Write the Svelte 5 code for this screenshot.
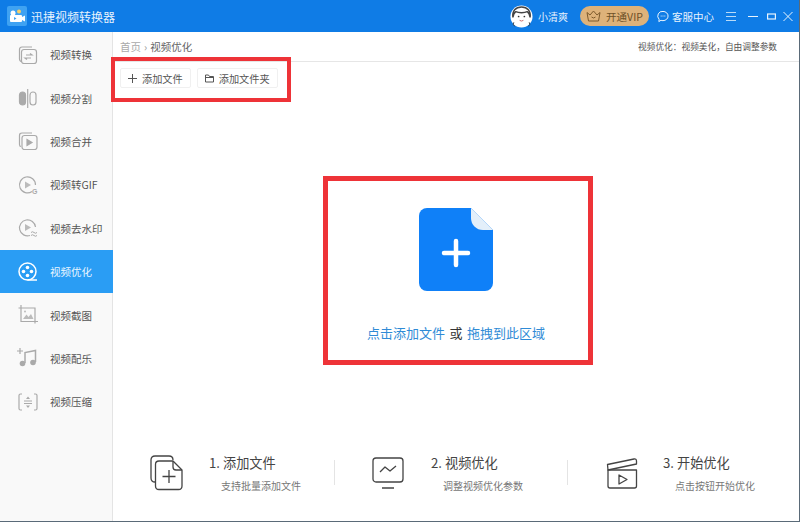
<script>
  const navItems = [
    { key: "convert", label: "视频转换" },
    { key: "split", label: "视频分割" },
    { key: "merge", label: "视频合并" },
    { key: "gif", label: "视频转GIF" },
    { key: "mark", label: "视频去水印" },
    { key: "optimize", label: "视频优化", active: true },
    { key: "shot", label: "视频截图" },
    { key: "music", label: "视频配乐" },
    { key: "zip", label: "视频压缩" }
  ];

  const steps = [
    { key: "add", title: "1. 添加文件", desc: "支持批量添加文件" },
    { key: "tune", title: "2. 视频优化", desc: "调整视频优化参数" },
    { key: "start", title: "3. 开始优化", desc: "点击按钮开始优化" }
  ];
</script>

<div class="window">
  <header class="titlebar">
    <div class="brand">
      <svg class="logo" width="20" height="20" viewBox="0 0 20 20">
        <rect width="20" height="20" rx="2" fill="#3fa2f2" />
        <rect x="3" y="9" width="12" height="7" rx="1" fill="#fff" />
        <path d="M15 11l3-1.500v6l-3-1.500z" fill="#fff" />
        <circle cx="6" cy="7" r="2.500" fill="#fff" />
        <circle cx="12" cy="5.500" r="2" fill="#f6cf6a" />
        <path d="M7 11v3l2.500-1.500z" fill="#3fa2f2" />
      </svg>
      <span>迅捷视频转换器</span>
    </div>
    <div class="actions">
      <svg class="avatar" width="23" height="23" viewBox="0 0 24 24">
        <circle cx="12" cy="12" r="11.500" fill="#fff" />
        <path d="M3 13C2 6 6 2 12 2s10 4 9 11c-.5-3-1.500-5-3-6-3 1.500-9 1.500-12 0-1.500 1-2.500 3-3 6z" fill="none" stroke="#444" stroke-width="1.500" />
        <circle cx="9" cy="12" r=".9" fill="#333" />
        <circle cx="15" cy="12" r=".9" fill="#333" />
        <path d="M10 16q2 1.500 4 0" fill="none" stroke="#c66" stroke-width="1" />
        <path d="M4 18q-2 3 1 4M20 18q2 3-1 4" fill="none" stroke="#444" stroke-width="1" />
      </svg>
      <span class="user">小清爽</span>
      <div class="vip">
        <svg width="15" height="13" viewBox="0 0 15 13" fill="none" stroke="#7d5a2c" stroke-width="1">
          <path d="M1 2.500l3 2.500 3.500-4 3.500 4 3-2.500-1.500 8.500h-10z" />
          <path d="M5.500 7q2 2 4 0" />
        </svg>
        <span>开通VIP</span>
      </div>
      <div class="service">
        <svg width="12" height="13" viewBox="0 0 13 13" fill="none" stroke="#fff" stroke-width="1">
          <path d="M6.500 1a5.500 5 0 0 1 0 10c-.8 0-1.500-.1-2.200-.4L2 12l.3-2.500A5 5 0 0 1 6.500 1z" />
          <path d="M4 6h1M6 6h1M8 6h1" />
        </svg>
        <span>客服中心</span>
      </div>
      <div class="winbtns">
        <svg class="menu" width="10" height="11" viewBox="0 0 10 11" stroke="#b9dbf8" stroke-width="1"><path d="M0 1.500h10M0 5.500h10M0 9.500h10" /></svg>
        <svg class="min" width="10" height="11" viewBox="0 0 10 11" stroke="#e8f3fd" stroke-width="1"><path d="M0 5.500h10" /></svg>
        <svg class="max" width="9" height="11" viewBox="0 0 9 11" fill="none" stroke="#e8f3fd" stroke-width="1.200"><rect x=".6" y="3" width="7.800" height="5" /></svg>
        <svg class="close" width="10" height="11" viewBox="0 0 10 11" stroke="#e8f3fd" stroke-width="1"><path d="M.5 1l9 9M9.500 1l-9 9" /></svg>
      </div>
    </div>
  </header>

  <div class="body">
    <nav class="sidebar">
      {#each navItems as item}
        <div class="nav-item" class:active={item.active}>
          <svg class="nav-icon" width="22" height="22" viewBox="0 0 22 22" fill="none" stroke="#aaa" stroke-width="1.200">
            {#if item.key === "convert"}
              <path d="M5 17.500c-1.500 0-2.500-1-2.500-2.500V5.500C2.500 4 3.500 3 5 3h10" />
              <rect x="4.500" y="5.500" width="15" height="14" rx="2.500" />
              <path d="M9 11h6l-2-1.500M14 14H8l2 1.500" />
            {:else if item.key === "split"}
              <rect x="2.500" y="5" width="6" height="13" rx="3" fill="#aaa" />
              <rect x="13" y="5" width="6" height="13" rx="3" />
              <path d="M10.700 2v19" />
            {:else if item.key === "merge"}
              <path d="M4 16.500c-1 0-1.500-1-1.500-2V5.500C2.500 3.500 3.500 3 5 3h10" />
              <rect x="5" y="5.500" width="15" height="14" rx="2.500" />
              <path d="M10 9.500l5 3-5 3z" fill="#aaa" />
            {:else if item.key === "gif"}
              <path d="M15 17.500A8 8 0 1 1 18.500 11" />
              <path d="M8 7.500l6 3.500-6 3.500z" fill="#bbb" stroke="none" />
              <text x="15" y="20" font-size="7" font-family="Liberation Sans, sans-serif" font-weight="700" fill="#aaa" stroke="none">G</text>
            {:else if item.key === "mark"}
              <path d="M13 18.500A8 8 0 1 1 18.500 10" />
              <path d="M8 7l6 3.500-6 3.500z" fill="#bbb" stroke="none" />
              <path d="M14 15.500q1.500-1.500 3 0t3 0M14 18.500q1.500-1.500 3 0t3 0" stroke-width="1" />
            {:else if item.key === "optimize"}
              <g stroke="#fff">
                <circle cx="10.500" cy="10.500" r="8.500" stroke-width="1.500" />
                <path d="M10.500 19H20" stroke-width="1.500" />
              </g>
              <g fill="#fff" stroke="none">
                <circle cx="10.500" cy="6.500" r="1.800" />
                <circle cx="6.500" cy="10.500" r="1.800" />
                <circle cx="14.500" cy="10.500" r="1.800" />
                <circle cx="10.500" cy="14.500" r="1.800" />
              </g>
            {:else if item.key === "shot"}
              <path d="M4 1v16.500h17M1.500 4H18v15.500" />
              <path d="M6 15l3.500-4.500 2 2.500 2.500-3 2.500 5z" fill="#bbb" stroke="none" />
              <circle cx="8" cy="7.500" r="1" fill="#bbb" stroke="none" />
            {:else if item.key === "music"}
              <path d="M8 16V5.500l10.500-2V15" stroke-width="1.500" />
              <circle cx="5.500" cy="16.500" r="2.800" fill="#aaa" stroke="none" />
              <circle cx="16" cy="15.500" r="2.800" fill="#aaa" stroke="none" />
              <path d="M0 4h6M3 1v6" />
            {:else}
              <path d="M5 3H3.500C2.500 3 2 3.500 2 4.500v13c0 1 .5 1.500 1.500 1.500H5M17 3h1.500c1 0 1.500.5 1.500 1.500v13c0 1-.5 1.500-1.500 1.500H17" />
              <path d="M7 10h8M7 12.500h8" />
              <path d="M9 8l2-2.500L13 8zM9 14.500l2 2.500 2-2.500z" fill="#aaa" stroke="none" />
            {/if}
          </svg>
          <span>{item.label}</span>
        </div>
      {/each}
    </nav>

    <main class="content">
      <div class="crumbs">
        <div class="path"><span class="home">首页</span><span class="sep">›</span><span>视频优化</span></div>
        <div class="hint">视频优化：视频美化，自由调整参数</div>
      </div>

      <div class="toolbar">
        <button class="tool" type="button">
          <svg width="9" height="9" viewBox="0 0 9 9" stroke="#555" stroke-width="1"><path d="M4.500 0v9M0 4.500h9" /></svg>
          添加文件
        </button>
        <button class="tool" type="button">
          <svg width="9" height="9" viewBox="0 0 9 9" fill="none" stroke="#555" stroke-width="1"><path d="M.5 8V1h3l1 1.500h4V8z" /><path d="M.5 3.500h8" /></svg>
          添加文件夹
        </button>
      </div>

      <section class="drop">
        <svg width="74" height="83" viewBox="0 0 74 83">
          <path d="M8 0H52L74 22V75a8 8 0 0 1-8 8H8a8 8 0 0 1-8-8V8a8 8 0 0 1 8-8z" fill="#0f80f8" />
          <path d="M52 0L74 22H64a12 12 0 0 1-12-12z" fill="#e3effa" />
          <path d="M37 33V57M25 45H49" stroke="#fff" stroke-width="4.500" stroke-linecap="round" />
        </svg>
        <p class="drop-text"><span>点击添加文件</span> <em>或</em> <span>拖拽到此区域</span></p>
      </section>

      <div class="steps">
        {#each steps as step}
          <div class="step">
            <svg width="34" height="36" viewBox="0 0 34 36" fill="none" stroke="#444" stroke-width="1.300" stroke-linejoin="round">
              {#if step.key === "add"}
                <path d="M5 27c-2.500 0-4-1.500-4-4V5c0-2.500 1.500-4 4-4h14c2.500 0 4 1.500 4 4" />
                <path d="M9 6h14l9 9v16c0 2.500-1.500 3.500-3.500 3.500H9c-2 0-3.500-1-3.500-3.500V9.500C5.500 7 7 6 9 6z" />
                <path d="M23 6v6c0 2 1 3 3 3h6M19 15v13M12.500 21.500h13" />
              {:else if step.key === "tune"}
                <rect x="1" y="3" width="30" height="24" rx="3" />
                <path d="M8 17l5-5 5 4 6-5M10 33h12" />
              {:else}
                <path d="M2 15L1.500 9.500 28 4c1.500-.3 2.500.3 2.500 2v3z" />
                <path d="M2 15h28.500v16c0 1.200-.8 2-2 2H4c-1.200 0-2-.8-2-2z" />
                <path d="M13 20l8 4.500-8 4.500z" />
              {/if}
            </svg>
            <div class="step-text">
              <div class="step-title">{step.title}</div>
              <div class="step-desc">{step.desc}</div>
            </div>
          </div>
        {/each}
      </div>

      <div class="mark mark-tools"></div>
      <div class="mark mark-drop"></div>
    </main>
  </div>
</div>

<style>
  :global(body) {
    margin: 0;
    background: #fff;
  }

  .window {
    width: 800px;
    height: 522px;
    display: flex;
    flex-direction: column;
    box-sizing: border-box;
    border-right: 1px solid #5a6a78;
    border-bottom: 1px solid #5a6a78;
    font-family: "Noto Sans CJK SC", "Liberation Sans", sans-serif;
    color: #555;
    overflow: hidden;
  }

  .titlebar {
    flex: none;
    height: 32px;
    margin-right: -1px;
    padding: 0 7px;
    display: flex;
    align-items: center;
    justify-content: space-between;
    background: #0f7ce6;
    color: #e6f2fd;
  }

  .brand {
    display: flex;
    align-items: center;
    gap: 4px;
    font-size: 12px;
  }

  .actions {
    display: flex;
    align-items: center;
    font-size: 10.500px;
  }

  .user {
    margin-left: 5px;
    font-size: 10px;
  }

  .vip {
    margin-left: 12px;
    width: 69px;
    height: 20px;
    display: flex;
    align-items: center;
    justify-content: center;
    gap: 5px;
    border-radius: 10px;
    background: #deb27a;
    color: #6e5128;
  }

  .service {
    margin-left: 8px;
    display: flex;
    align-items: center;
    gap: 3px;
  }

  .winbtns {
    margin-left: 12px;
    display: flex;
    align-items: center;
  }

  .winbtns .min {
    margin-left: 12px;
  }

  .winbtns .max {
    margin-left: 9px;
  }

  .winbtns .close {
    margin-left: 7px;
  }

  .body {
    flex: 1;
    min-height: 0;
    display: flex;
  }

  .sidebar {
    flex: none;
    width: 112px;
    padding-top: 1px;
    background: #f9f9f9;
    border-right: 1px solid #e4e4e4;
  }

  .nav-item {
    height: 43.400px;
    padding-left: 17px;
    display: flex;
    align-items: center;
    gap: 11px;
    font-size: 10.500px;
    color: #555;
    box-sizing: border-box;
  }

  .nav-item.active {
    margin-right: -1px;
    background: #2a9df4;
    color: #e8f5ff;
  }

  .nav-icon {
    flex: none;
  }

  .content {
    position: relative;
    flex: 1;
    min-width: 0;
    display: flex;
    flex-direction: column;
  }

  .crumbs {
    flex: none;
    height: 29px;
    padding: 0 22px 0 7px;
    display: flex;
    align-items: center;
    justify-content: space-between;
    border-bottom: 1px solid #e6e6e6;
    font-size: 10.500px;
  }

  .path {
    display: flex;
    align-items: center;
    color: #666;
  }

  .home {
    color: #aaa;
  }

  .sep {
    margin: 0 3px;
    color: #999;
  }

  .hint {
    font-size: 8.700px;
    color: #555;
  }

  .toolbar {
    flex: none;
    padding: 6px 0 0 7px;
    display: flex;
    gap: 6px;
  }

  .tool {
    height: 20px;
    padding: 0 7px;
    display: flex;
    align-items: center;
    gap: 5px;
    background: #fff;
    border: 1px solid #f0f0f0;
    border-radius: 2px;
    font: inherit;
    font-size: 10.200px;
    color: #555;
  }

  .drop {
    flex: none;
    margin-top: 120px;
    display: flex;
    flex-direction: column;
    align-items: center;
  }

  .drop-text {
    margin: 33px 0 0;
    font-size: 13px;
    line-height: 18px;
    color: #2f8bd6;
  }

  .drop-text em {
    margin: 0 1.500px;
    font-style: normal;
    color: #333;
  }

  .steps {
    flex: none;
    margin-top: 113px;
    padding-left: 37px;
    display: flex;
  }

  .step {
    box-sizing: border-box;
    display: flex;
    align-items: center;
    gap: 25px;
    height: 36px;
  }

  .step:nth-child(1) {
    width: 184px;
  }

  .step:nth-child(2) {
    width: 233px;
    padding-left: 38px;
  }

  .step:nth-child(3) {
    padding-left: 39px;
    gap: 23px;
  }

  .step + .step {
    position: relative;
  }

  .step + .step::before {
    content: "";
    position: absolute;
    left: 0;
    top: 5px;
    height: 25px;
    width: 1px;
    background: #e4e4e4;
  }

  .step-title {
    font-size: 13.200px;
    line-height: 16px;
    color: #444;
  }

  .step-desc {
    margin-top: 9px;
    padding-left: 12px;
    font-size: 10px;
    line-height: 12px;
    color: #777;
  }

  /* red annotation boxes drawn over the app */
  .mark {
    position: absolute;
    box-sizing: border-box;
    border: 4px solid #ee3338;
    pointer-events: none;
  }

  .mark-tools {
    left: -2px;
    top: 25px;
    width: 180px;
    height: 45px;
  }

  .mark-drop {
    left: 210px;
    top: 144px;
    width: 270px;
    height: 189px;
    border-width: 5px;
  }
</style>
